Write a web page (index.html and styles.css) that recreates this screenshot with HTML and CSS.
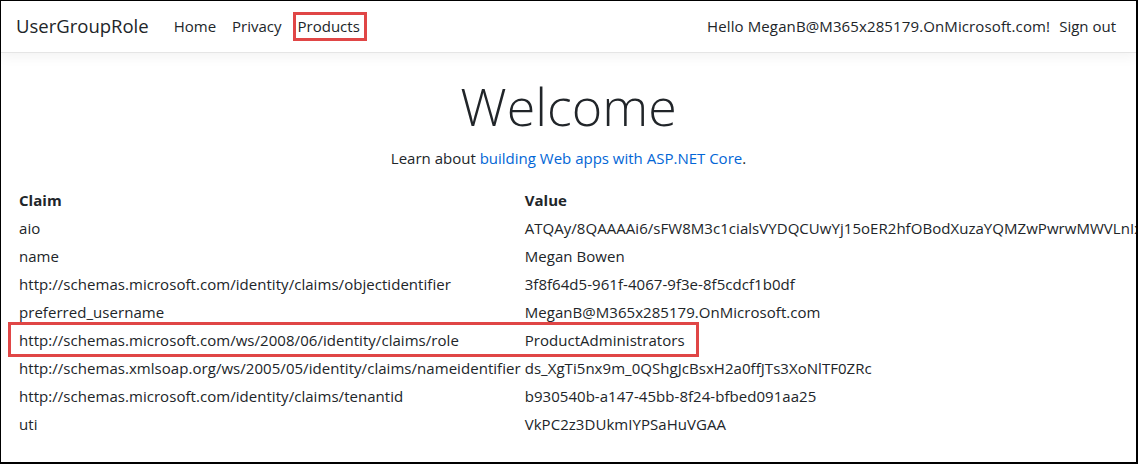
FILE: index.html
```html
<!DOCTYPE html>
<html lang="en">
<head>
<meta charset="utf-8">
<title>Home Page - UserGroupRole</title>
<link rel="stylesheet" href="styles.css">
</head>
<body>
<div class="frame">
  <header class="navbar">
    <a class="brand" href="#">UserGroupRole</a>
    <nav class="nav-left">
      <a class="nav-link" href="#">Home</a>
      <a class="nav-link" href="#">Privacy</a>
      <a class="nav-link marked" href="#">Products</a>
    </nav>
    <nav class="nav-right">
      <span class="nav-text">Hello MeganB@M365x285179.OnMicrosoft.com!</span>
      <a class="nav-link" href="#">Sign out</a>
    </nav>
  </header>
  <main class="main">
    <div class="hero">
      <h1 class="display">Welcome</h1>
      <p class="lead-line">Learn about <a href="#">building Web apps with ASP.NET Core</a>.</p>
    </div>
    <div class="table-wrap">
      <table class="claims">
        <thead>
          <tr><th>Claim</th><th>Value</th></tr>
        </thead>
        <tbody>
          <tr><td>aio</td><td>ATQAy/8QAAAAi6/sFW8M3c1cialsVYDQCUwYj15oER2hfOBodXuzaYQMZwPwrwMWVLnIxYwcRWKGz1Bq</td></tr>
          <tr><td>name</td><td>Megan Bowen</td></tr>
          <tr><td>http://schemas.microsoft.com/identity/claims/objectidentifier</td><td>3f8f64d5-961f-4067-9f3e-8f5cdcf1b0df</td></tr>
          <tr><td>preferred_username</td><td>MeganB@M365x285179.OnMicrosoft.com</td></tr>
          <tr><td>http://schemas.microsoft.com/ws/2008/06/identity/claims/role</td><td>ProductAdministrators</td></tr>
          <tr><td>http://schemas.xmlsoap.org/ws/2005/05/identity/claims/nameidentifier</td><td>ds_XgTi5nx9m_0QShgJcBsxH2a0ffJTs3XoNlTF0ZRc</td></tr>
          <tr><td>http://schemas.microsoft.com/identity/claims/tenantid</td><td>b930540b-a147-45bb-8f24-bfbed091aa25</td></tr>
          <tr><td>uti</td><td>VkPC2z3DUkmIYPSaHuVGAA</td></tr>
        </tbody>
      </table>
      <div class="row-mark"></div>
    </div>
  </main>
</div>
</body>
</html>
```

FILE: styles.css
```css
* { box-sizing: border-box; }
html, body { margin: 0; padding: 0; height: 100%; }
body {
  font-family: "Open Sans", "Noto Sans", sans-serif;
  font-size: 15px;
  line-height: 24px;
  color: #212529;
  background: #ffffff;
}
a { text-decoration: none; }
.frame {
  height: 464px;
  border-top: 1px solid #000;
  border-left: 1px solid #000;
  border-right: 2px solid #000;
  border-bottom: 2px solid #000;
  overflow: hidden;
  position: relative;
}
.navbar {
  display: flex;
  align-items: center;
  height: 52px;
  padding: 0 12px 2px 15px;
  border-bottom: 1px solid #e5e5e5;
  box-shadow: 0 4px 12px rgba(0,0,0,0.05);
}
.brand {
  font-size: 18.5px;
  color: #212529;
  margin-right: 17px;
}
.nav-left { display: flex; flex: 1; }
.nav-right { display: flex; align-items: center; }
.nav-link {
  display: block;
  color: #212529;
  padding: 0 8px;
  position: relative;
}
.nav-text { color: #212529; padding: 0 1px; letter-spacing: 0.12px; }
.marked::after {
  content: "";
  position: absolute;
  left: 3px;
  right: 1px;
  top: -2px;
  bottom: -3px;
  border: 3px solid #e04646;
}
.main {
  padding: 0 15px;
}
.hero { text-align: center; padding-top: 22px; }
.display {
  margin: 0;
  font-size: 52px;
  font-weight: 300;
  line-height: 62px;
}
.lead-line { margin: 9px 0 15px; }
.lead-line a { color: #0366d6; }
.table-wrap { position: relative; }
.claims {
  border-collapse: separate;
  border-spacing: 2px;
  white-space: nowrap;
  letter-spacing: 0.045px;
}
.claims th, .claims td {
  padding: 1px;
  text-align: left;
  vertical-align: top;
}
.claims th { font-weight: 700; }
.row-mark {
  position: absolute;
  left: -8px;
  top: 137px;
  width: 691px;
  height: 35px;
  border: 3px solid #e04646;
}
```
